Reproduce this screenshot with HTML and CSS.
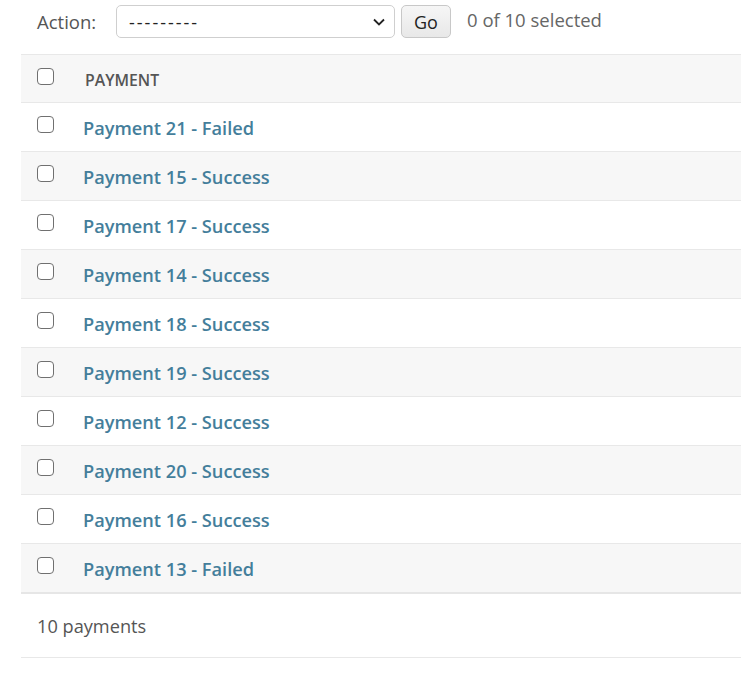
FILE: index.html
```html
<!DOCTYPE html>
<html lang="en">
<head>
<meta charset="utf-8">
<title>Select payment to change</title>
<link rel="stylesheet" href="styles.css">
</head>
<body>
<div class="changelist">
  <div class="actions">
    <label class="action-label">Action:</label>
    <div class="select">
      <span class="select-text">---------</span>
      <svg class="chev" width="14" height="10" viewBox="0 0 14 10"><path d="M2 2.5 L7 7.5 L12 2.5" fill="none" stroke="#222" stroke-width="1.8"/></svg>
    </div>
    <button class="go">Go</button>
    <span class="counter">0 of 10 selected</span>
  </div>
  <div class="results">
    <div class="row head">
      <span class="cb"></span>
      <span class="th">Payment</span>
    </div>
    <div class="row"><span class="cb"></span><a class="link">Payment 21 - Failed</a></div>
    <div class="row"><span class="cb"></span><a class="link">Payment 15 - Success</a></div>
    <div class="row"><span class="cb"></span><a class="link">Payment 17 - Success</a></div>
    <div class="row"><span class="cb"></span><a class="link">Payment 14 - Success</a></div>
    <div class="row"><span class="cb"></span><a class="link">Payment 18 - Success</a></div>
    <div class="row"><span class="cb"></span><a class="link">Payment 19 - Success</a></div>
    <div class="row"><span class="cb"></span><a class="link">Payment 12 - Success</a></div>
    <div class="row"><span class="cb"></span><a class="link">Payment 20 - Success</a></div>
    <div class="row"><span class="cb"></span><a class="link">Payment 16 - Success</a></div>
    <div class="row last"><span class="cb"></span><a class="link">Payment 13 - Failed</a></div>
  </div>
  <p class="paginator">10 payments</p>
</div>
</body>
</html>
```

FILE: styles.css
```css
html, body {
  margin: 0;
  padding: 0;
  background: #fff;
}
body {
  font-family: "Open Sans", "Noto Sans", sans-serif;
  color: #333;
  width: 741px;
  height: 687px;
  overflow: hidden;
}
.changelist {
  margin-left: 21px;
}
.actions {
  display: flex;
  align-items: center;
  height: 54px;
  padding-left: 16px;
  box-sizing: border-box;
  padding-bottom: 11px;
  padding-top: 0;
}
.action-label {
  font-size: 18.5px;
  color: #555;
  width: 79px;
}
.select {
  width: 279px;
  height: 33px;
  box-sizing: border-box;
  border: 1px solid #cfcfcf;
  border-radius: 5px;
  display: flex;
  align-items: center;
  justify-content: space-between;
  padding: 0 8px 0 12px;
  font-size: 18px;
  color: #222;
}
.select-text {
  letter-spacing: 2px;
}
.go {
  margin-left: 6px;
  width: 50px;
  height: 33px;
  border: 1px solid #c8c8c8;
  border-radius: 5px;
  background: linear-gradient(#f6f6f6, #e8e8e8);
  font-family: inherit;
  font-size: 18px;
  color: #222;
  padding: 0;
}
.counter {
  margin-left: 16px;
  font-size: 18.5px;
  color: #666;
  margin-top: -5px;
}
.results {
  border-top: 1px solid #e8e8e8;
  border-bottom: 2px solid #e6e6e6;
}
.row {
  display: flex;
  align-items: center;
  height: 48px;
  border-top: 1px solid #e8e8e8;
  padding-left: 16px;
}
.row:first-child {
  border-top: none;
}
.row:nth-child(odd) {
  background: #f7f7f7;
}
.head {
  height: 47px;
  background: #f6f6f6;
}
.cb {
  width: 15px;
  height: 15px;
  border: 1.5px solid #707070;
  border-radius: 4px;
  background: #fff;
  flex: none;
  margin-top: -5px;
}
.th {
  margin-left: 31px;
  font-size: 15.8px;
  font-weight: 600;
  text-transform: uppercase;
  color: #555;
  margin-top: 2px;
}
.link {
  margin-left: 29px;
  font-size: 18.2px;
  font-weight: 600;
  color: #447e9b;
  text-decoration: none;
  margin-top: 1px;
}
.paginator {
  margin: 0;
  height: 64px;
  box-sizing: border-box;
  border-bottom: 1px solid #e8e8e8;
  padding-left: 16px;
  display: flex;
  align-items: center;
  font-size: 18.2px;
  color: #555;
}
```
